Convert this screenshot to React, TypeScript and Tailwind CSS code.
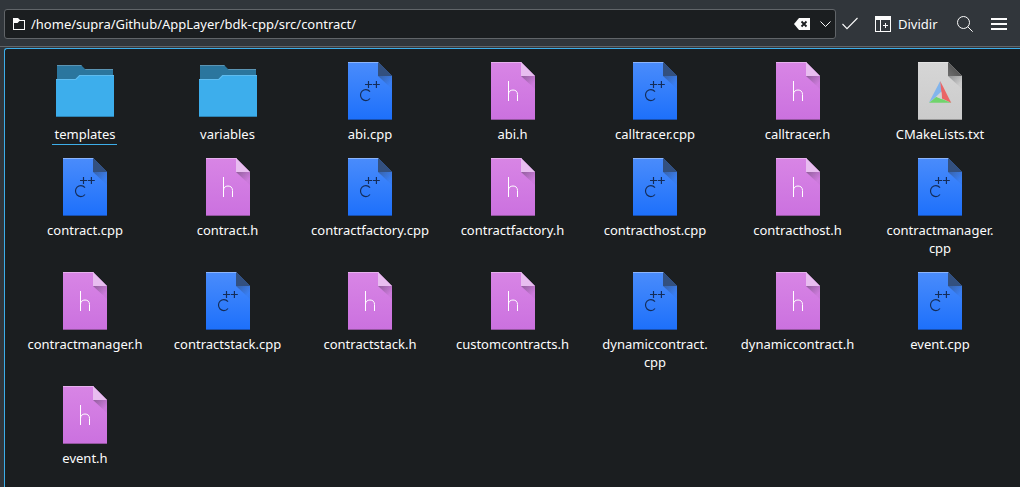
type FileKind = 'folder' | 'cpp' | 'header' | 'cmake';

interface Entry {
  name: string;
  kind: FileKind;
  lines?: string[];
  current?: boolean;
}

const entries: Entry[] = [
  { name: 'templates', kind: 'folder', current: true },
  { name: 'variables', kind: 'folder' },
  { name: 'abi.cpp', kind: 'cpp' },
  { name: 'abi.h', kind: 'header' },
  { name: 'calltracer.cpp', kind: 'cpp' },
  { name: 'calltracer.h', kind: 'header' },
  { name: 'CMakeLists.txt', kind: 'cmake' },
  { name: 'contract.cpp', kind: 'cpp' },
  { name: 'contract.h', kind: 'header' },
  { name: 'contractfactory.cpp', kind: 'cpp' },
  { name: 'contractfactory.h', kind: 'header' },
  { name: 'contracthost.cpp', kind: 'cpp' },
  { name: 'contracthost.h', kind: 'header' },
  { name: 'contractmanager.cpp', kind: 'cpp', lines: ['contractmanager.', 'cpp'] },
  { name: 'contractmanager.h', kind: 'header' },
  { name: 'contractstack.cpp', kind: 'cpp' },
  { name: 'contractstack.h', kind: 'header' },
  { name: 'customcontracts.h', kind: 'header' },
  { name: 'dynamiccontract.cpp', kind: 'cpp', lines: ['dynamiccontract.', 'cpp'] },
  { name: 'dynamiccontract.h', kind: 'header' },
  { name: 'event.cpp', kind: 'cpp' },
  { name: 'event.h', kind: 'header' },
];

const columns = 7;

function FolderIcon() {
  return (
    <svg className="size-16" viewBox="0 0 64 64">
      <path d="M4 6h24l4 4h28v20H4z" fill="#2b769e" />
      <path d="M32 10h28v1H32.5zM4 6h24l1 1H4z" fill="#5b94b3" />
      <path d="M3 20h19.5l4-4H61v42H3z" fill="#3daeec" />
      <path d="M3 20h19.5l4-4H61v1H27l-4 4H3z" fill="#5fbcef" />
      <path d="M3 57h58v1H3z" fill="#2d83b3" />
    </svg>
  );
}

function Gradients() {
  return (
    <svg className="absolute size-0" aria-hidden="true">
      <defs>
        <linearGradient id="page-cpp" x1="0" y1="0" x2="0" y2="1">
          <stop offset="0" stopColor="#4a8cfb" />
          <stop offset="1" stopColor="#1d70fb" />
        </linearGradient>
        <linearGradient id="page-header" x1="0" y1="0" x2="0" y2="1">
          <stop offset="0" stopColor="#d885e5" />
          <stop offset="1" stopColor="#cb71df" />
        </linearGradient>
        <linearGradient id="page-cmake" x1="0" y1="0" x2="0" y2="1">
          <stop offset="0" stopColor="#d6d6d6" />
          <stop offset="1" stopColor="#cbcbcb" />
        </linearGradient>
        <linearGradient id="fold-shadow" gradientUnits="userSpaceOnUse" x1="41" y1="16" x2="51" y2="26">
          <stop offset="0" stopColor="#292c2f" stopOpacity="0.4" />
          <stop offset="1" stopColor="#292c2f" stopOpacity="0.04" />
        </linearGradient>
        <linearGradient id="fold-cmake" gradientUnits="userSpaceOnUse" x1="40" y1="17" x2="47" y2="10">
          <stop offset="0" stopColor="#6f6f6f" />
          <stop offset="1" stopColor="#585858" />
        </linearGradient>
      </defs>
    </svg>
  );
}

const pageStyle = {
  cpp: { fill: 'url(#page-cpp)', fold: '#33507f', top: '#8bb4fb', bottom: '#194fae' },
  header: { fill: 'url(#page-header)', fold: '#e8bdf0', top: '#e6b0ee', bottom: '#93559f' },
  cmake: { fill: 'url(#page-cmake)', fold: 'url(#fold-cmake)', top: '#e2e2e2', bottom: '#969696' },
};

function PageIcon({ kind }: { kind: 'cpp' | 'header' | 'cmake' }) {
  const s = pageStyle[kind];
  return (
    <svg className="size-16" viewBox="0 0 64 64">
      <path d="M10 3h30l14 14v44H10z" fill={s.fill} />
      <path d="M10 3h30l1 1H10z" fill={s.top} />
      <path d="M10 60h44v1H10z" fill={s.bottom} />
      <path d="M40 17h14v13z" fill="url(#fold-shadow)" />
      <path d="M40 3l14 14H40z" fill={s.fold} />
      {kind === 'cpp' && (
        <g fill="none" stroke="#142c58" strokeWidth="1.15">
          <path d="M32 32.700c-1-1.300-2.400-2.100-4.100-2.100a5.400 5.500 0 0 0 0 11c1.700 0 3.100-.8 4.100-2.100" />
          <path d="M27 25.500h7M30.500 22v7M34.800 25.500h7M38.400 22v7" />
        </g>
      )}
      {kind === 'header' && (
        <path d="M27.500 22v20M27.500 35.500c0-3 1.800-4.500 4.500-4.500s4.500 1.500 4.500 4.500v6.500" fill="none" stroke="#fff" strokeWidth="1" />
      )}
      {kind === 'cmake' && (
        <g>
          <path d="M32.200 22L21 43.500l12.800-10z" fill="#82b5ec" />
          <path d="M32.200 22L43.300 44l-9.300-4.500z" fill="#ea6666" />
          <path d="M21 43.800l7.500-6 14.500 6z" fill="#70d46c" />
          <path d="M33.400 32.500L28 37.800l5.900 2.400z" fill="#d0d2d4" />
        </g>
      )}
    </svg>
  );
}

function FileItem({ entry, shifted }: { entry: Entry; shifted: boolean }) {
  const lines = entry.lines ?? [entry.name];
  return (
    <div className="flex w-[142px] flex-col items-center">
      {entry.kind === 'folder' ? <FolderIcon /> : <PageIcon kind={entry.kind} />}
      <div
        className={
          entry.current
            ? 'mt-[2px] mr-px h-5 border-b border-[#3daee9] pr-px pl-[2px] text-center leading-[18px]'
            : shifted
              ? 'mt-[2px] mr-px text-center leading-[18px]'
              : 'mt-[2px] text-center leading-[18px]'
        }
      >
        {lines.map((line) => (
          <div key={line}>{line}</div>
        ))}
      </div>
    </div>
  );
}

function Toolbar() {
  return (
    <header className="flex h-[46px] shrink-0 items-start pt-[9px]">
      <div className="ml-1 flex h-[30px] w-[832px] items-center rounded-[3px] border border-[#616569] bg-[#1b1e20] pl-2">
        <svg className="size-3" viewBox="0 0 12 12">
          <path d="M0 0h5l2 2h5v10H0zM1 5v6h10V3H6.500L4.500 5z" fill="#fcfcfc" fillRule="evenodd" />
        </svg>
        <span className="ml-[6px] flex-1 leading-[18px] whitespace-pre">/home/supra/Github/AppLayer/bdk-cpp/src/contract/</span>
        <svg className="h-3 w-4" viewBox="0 0 16 12">
          <path d="M5 0h11v12H5L0 6z" fill="#fcfcfc" />
          <path d="M7.500 3.500l5 5M12.500 3.500l-5 5" stroke="#1b1e20" strokeWidth="1.800" />
        </svg>
        <svg className="mr-[4px] ml-[10px] h-[6px] w-[11px]" viewBox="0 0 11 6">
          <path d="M.5.500l5 5 5-5" fill="none" stroke="#fcfcfc" />
        </svg>
      </div>
      <svg className="mt-2 ml-[6px] h-[13px] w-4" viewBox="0 0 16 13">
        <path d="M.5 7l4.500 4.700L15.500 1" fill="none" stroke="#fcfcfc" strokeWidth="1.100" />
      </svg>
      <svg className="mt-[7px] ml-[17px] size-4" viewBox="0 0 16 16">
        <path d="M0 0h16v16H0zM1 4v11h4V4zM6 4v11h9V4z" fill="#fcfcfc" fillRule="evenodd" />
        <path d="M8 9.500h5M10.500 7v5" stroke="#fcfcfc" />
      </svg>
      <span className="mt-[6px] ml-[7px] w-10 leading-[18px]">Dividir</span>
      <svg className="mt-[7px] ml-[19px] size-4" viewBox="0 0 16 16">
        <circle cx="6.500" cy="6.500" r="6" fill="none" stroke="#fcfcfc" />
        <path d="M10.700 10.700l5 5" stroke="#fcfcfc" />
      </svg>
      <svg className="mt-[9px] ml-[18px] h-3 w-4" viewBox="0 0 16 12">
        <path d="M0 0h16v2H0zM0 5h16v2H0zM0 10h16v2H0z" fill="#fcfcfc" />
      </svg>
    </header>
  );
}

export default function App() {
  return (
    <div className="flex h-[487px] w-[1020px] flex-col overflow-hidden bg-[#31363b] font-['Noto_Sans',sans-serif] text-[13px] text-[#fcfcfc]">
      <Gradients />
      <Toolbar />
      <div className="h-px shrink-0 bg-[#616569]" />
      <main className="mt-[1px] ml-1 flex-1 rounded-tl-[3px] border-t border-l border-[#3daee9] bg-[#1b1e20] pt-[10px] pl-[9px]">
        <div className="grid grid-cols-[143px_142px_143px_142px_143px_142px_142px] grid-rows-[96px_114px_114px_96px]">
          {entries.map((entry, i) => (
            <FileItem key={entry.name} entry={entry} shifted={(i % columns) % 2 === 1} />
          ))}
        </div>
      </main>
    </div>
  );
}
